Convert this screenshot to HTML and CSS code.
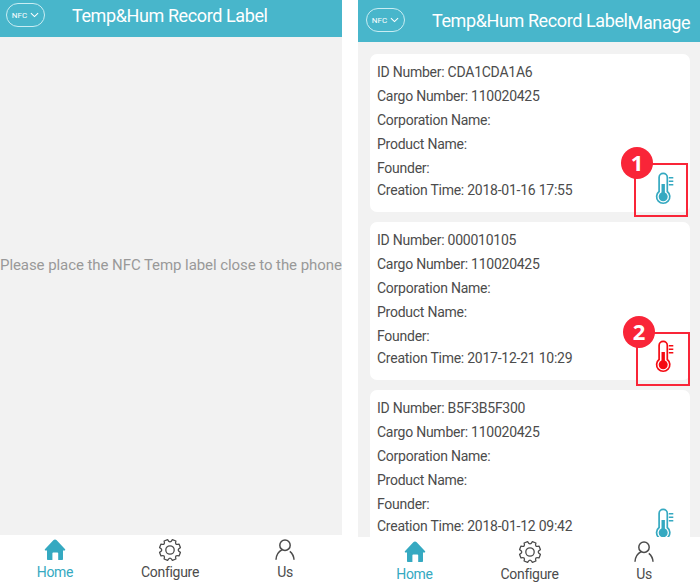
FILE: index.html
```html
<!DOCTYPE html>
<html lang="en">
<head>
<meta charset="utf-8">
<title>Temp&amp;Hum Record Label</title>
<link rel="stylesheet" href="styles.css">
</head>
<body>
<svg class="defs" aria-hidden="true">
  <symbol id="chevron" viewBox="0 0 10 6"><path d="M1 1l4 3.7L9 1" fill="none" stroke="currentColor" stroke-width="1.2"/></symbol>
  <symbol id="home" viewBox="0 0 24 24"><path d="M12 1.5c.7 0 1.2.3 1.7.8l8.200 8.600c.7.8.4 1.600-.7 1.600h-1.200V21c0 .7-.4 1.100-1.100 1.100h-3.700v-6.900c0-.5-.3-.8-.8-.8H10.200c-.5 0-.8.3-.8.8v6.900H5.100C4.400 22.100 4 21.700 4 21v-8.500H2.800c-1.100 0-1.400-.8-.7-1.600l8.200-8.600c.5-.5 1-.8 1.700-.8z" fill="currentColor"/></symbol>
  <symbol id="gear" viewBox="-12 -12 24 24"><g fill="none" stroke="currentColor" stroke-width="1.300" stroke-linejoin="round"><path d="M2.400 -10.400L5.900 -9Q4.400 -4.400 9 -5.900L10.400 -2.400Q6 0 10.400 2.400L9 5.900Q4.400 4.400 5.900 9L2.400 10.400Q0 6 -2.400 10.400L-5.900 9Q-4.400 4.400 -9 5.900L-10.400 2.400Q-6 0 -10.400 -2.400L-9 -5.900Q-4.400 -4.400 -5.900 -9L-2.400 -10.400Q0 -6 2.400 -10.400z"/><circle r="4.200"/></g></symbol>
  <symbol id="user" viewBox="0 0 24 24"><g fill="none" stroke="currentColor" stroke-width="1.500"><circle cx="12" cy="7.200" r="5.200"/><path d="M9.300 11.700C5.700 13.500 3.200 17 3 21.800M16.800 13.300c2.600 2 4 4.900 4.200 8.500"/></g></symbol>
  <symbol id="thermo" viewBox="0 0 20 34"><path d="M4.100 19.500V5.500a4.100 4.100 0 0 1 8.200 0v14a6.600 6.600 0 1 1-8.200 0z" fill="#fff" stroke="currentColor" stroke-width="1.700"/><circle cx="8.200" cy="24.800" r="4.500" fill="currentColor"/><path d="M8.200 12v12" stroke="currentColor" stroke-width="3.400"/><path d="M13.800 5.700h4.500M13.800 9.200h4.500M13.800 12.700h4.500" stroke="currentColor" stroke-width="1.600"/></symbol>
</svg>
<main class="screens">
  <section class="phone">
    <header class="bar">
      <span class="nfc">NFC <svg><use href="#chevron"/></svg></span>
      <h1>Temp&amp;Hum Record Label</h1>
    </header>
    <div class="empty"><p>Please place the NFC Temp label close to the phone</p></div>
    <nav class="tabs">
      <a class="tab active"><svg><use href="#home"/></svg>Home</a>
      <a class="tab"><svg><use href="#gear"/></svg>Configure</a>
      <a class="tab"><svg><use href="#user"/></svg>Us</a>
    </nav>
  </section>
  <section class="phone records">
    <header class="bar">
      <span class="nfc">NFC <svg><use href="#chevron"/></svg></span>
      <h1>Temp&amp;Hum Record Label</h1>
      <span class="manage">Manage</span>
    </header>
    <div class="list">
      <article class="card">
        <p>ID Number: CDA1CDA1A6</p><p>Cargo Number: 110020425</p><p>Corporation Name:</p><p>Product Name:</p><p>Founder:</p><p class="time">Creation Time: 2018-01-16 17:55</p>
        <svg class="thermo"><use href="#thermo"/></svg>
        <div class="callout"><b>1</b></div>
      </article>
      <article class="card">
        <p>ID Number: 000010105</p><p>Cargo Number: 110020425</p><p>Corporation Name:</p><p>Product Name:</p><p>Founder:</p><p class="time">Creation Time: 2017-12-21 10:29</p>
        <svg class="thermo alert"><use href="#thermo"/></svg>
        <div class="callout second"><b>2</b></div>
      </article>
      <article class="card">
        <p>ID Number: B5F3B5F300</p><p>Cargo Number: 110020425</p><p>Corporation Name:</p><p>Product Name:</p><p>Founder:</p><p class="time">Creation Time: 2018-01-12 09:42</p>
        <svg class="thermo"><use href="#thermo"/></svg>
      </article>
    </div>
    <nav class="tabs">
      <a class="tab active"><svg><use href="#home"/></svg>Home</a>
      <a class="tab"><svg><use href="#gear"/></svg>Configure</a>
      <a class="tab"><svg><use href="#user"/></svg>Us</a>
    </nav>
  </section>
</main>
</body>
</html>
```
FILE: styles.css
```css
* { box-sizing: border-box; }
body { margin: 0; background: #fff; color: #4c4c4c; font-family: Roboto, "Liberation Sans", sans-serif; overflow: hidden; }
h1, p { margin: 0; font-weight: 400; }
.defs { display: block; width: 0; height: 0; }
.screens { display: flex; gap: 16px; height: 583px; }
.phone { display: grid; grid-template-columns: 342px; grid-template-rows: 37px 498px 48px; flex: 0 0 342px; }
.records { grid-template-rows: 42px 495px 46px; }
.bar { display: flex; align-items: flex-start; padding: 3px 0 0 6px; background: #48b6cb; color: #fff; white-space: nowrap; }
.nfc { display: flex; align-items: center; justify-content: center; gap: 3px; width: 39px; height: 24px; border: 1px solid #c9edf3; border-radius: 12px; font-size: 8px; }
.nfc svg { width: 9px; height: 6px; }
.bar h1 { margin-left: 27px; font-size: 18px; line-height: 26px; letter-spacing: -.4px; }
.records .bar { padding: 8px 0 0 8px; }
.manage { font-size: 18px; line-height: 29px; letter-spacing: -.35px; }
.empty { display: flex; align-items: center; background: #f2f2f2; color: #999; font-size: 15px; letter-spacing: -.07px; white-space: nowrap; }
.empty p { position: relative; top: -21px; }
.tabs { display: grid; grid-template-columns: 110px 120px 110px; background: #fff; z-index: 1; }
.records .tabs { grid-template-columns: 113px 117px 112px; }
.tab { display: flex; flex-direction: column; align-items: center; padding-top: 3px; font-size: 14px; line-height: 21px; letter-spacing: -.3px; }
.tab svg { width: 24px; height: 24px; }
.active { color: #35a9c1; }
.list { display: flex; flex-direction: column; gap: 10px; padding: 12px 10px 0 12px; background: #f2f2f2; overflow: hidden; }
.card { position: relative; flex: 0 0 158px; padding: 6px 7px; border-radius: 7px; background: #fff; font-size: 14px; line-height: 24px; letter-spacing: -.25px; white-space: nowrap; }
.card .time { line-height: 20px; }
.thermo { position: absolute; left: 285px; top: 118px; width: 20px; height: 34px; color: #35a9c1; }
.alert { color: #f50a12; }
.callout { position: absolute; left: 264px; top: 109px; width: 54px; height: 54px; border: 2px solid #f92538; }
.callout.second { left: 266px; top: 110px; }
.callout b { position: absolute; left: -15px; top: -18px; width: 32px; height: 32px; border-radius: 50%; background: #f92538; color: #fff; font-family: "Noto Sans", sans-serif; font-size: 22px; line-height: 31px; letter-spacing: 0; text-align: center; }
```
